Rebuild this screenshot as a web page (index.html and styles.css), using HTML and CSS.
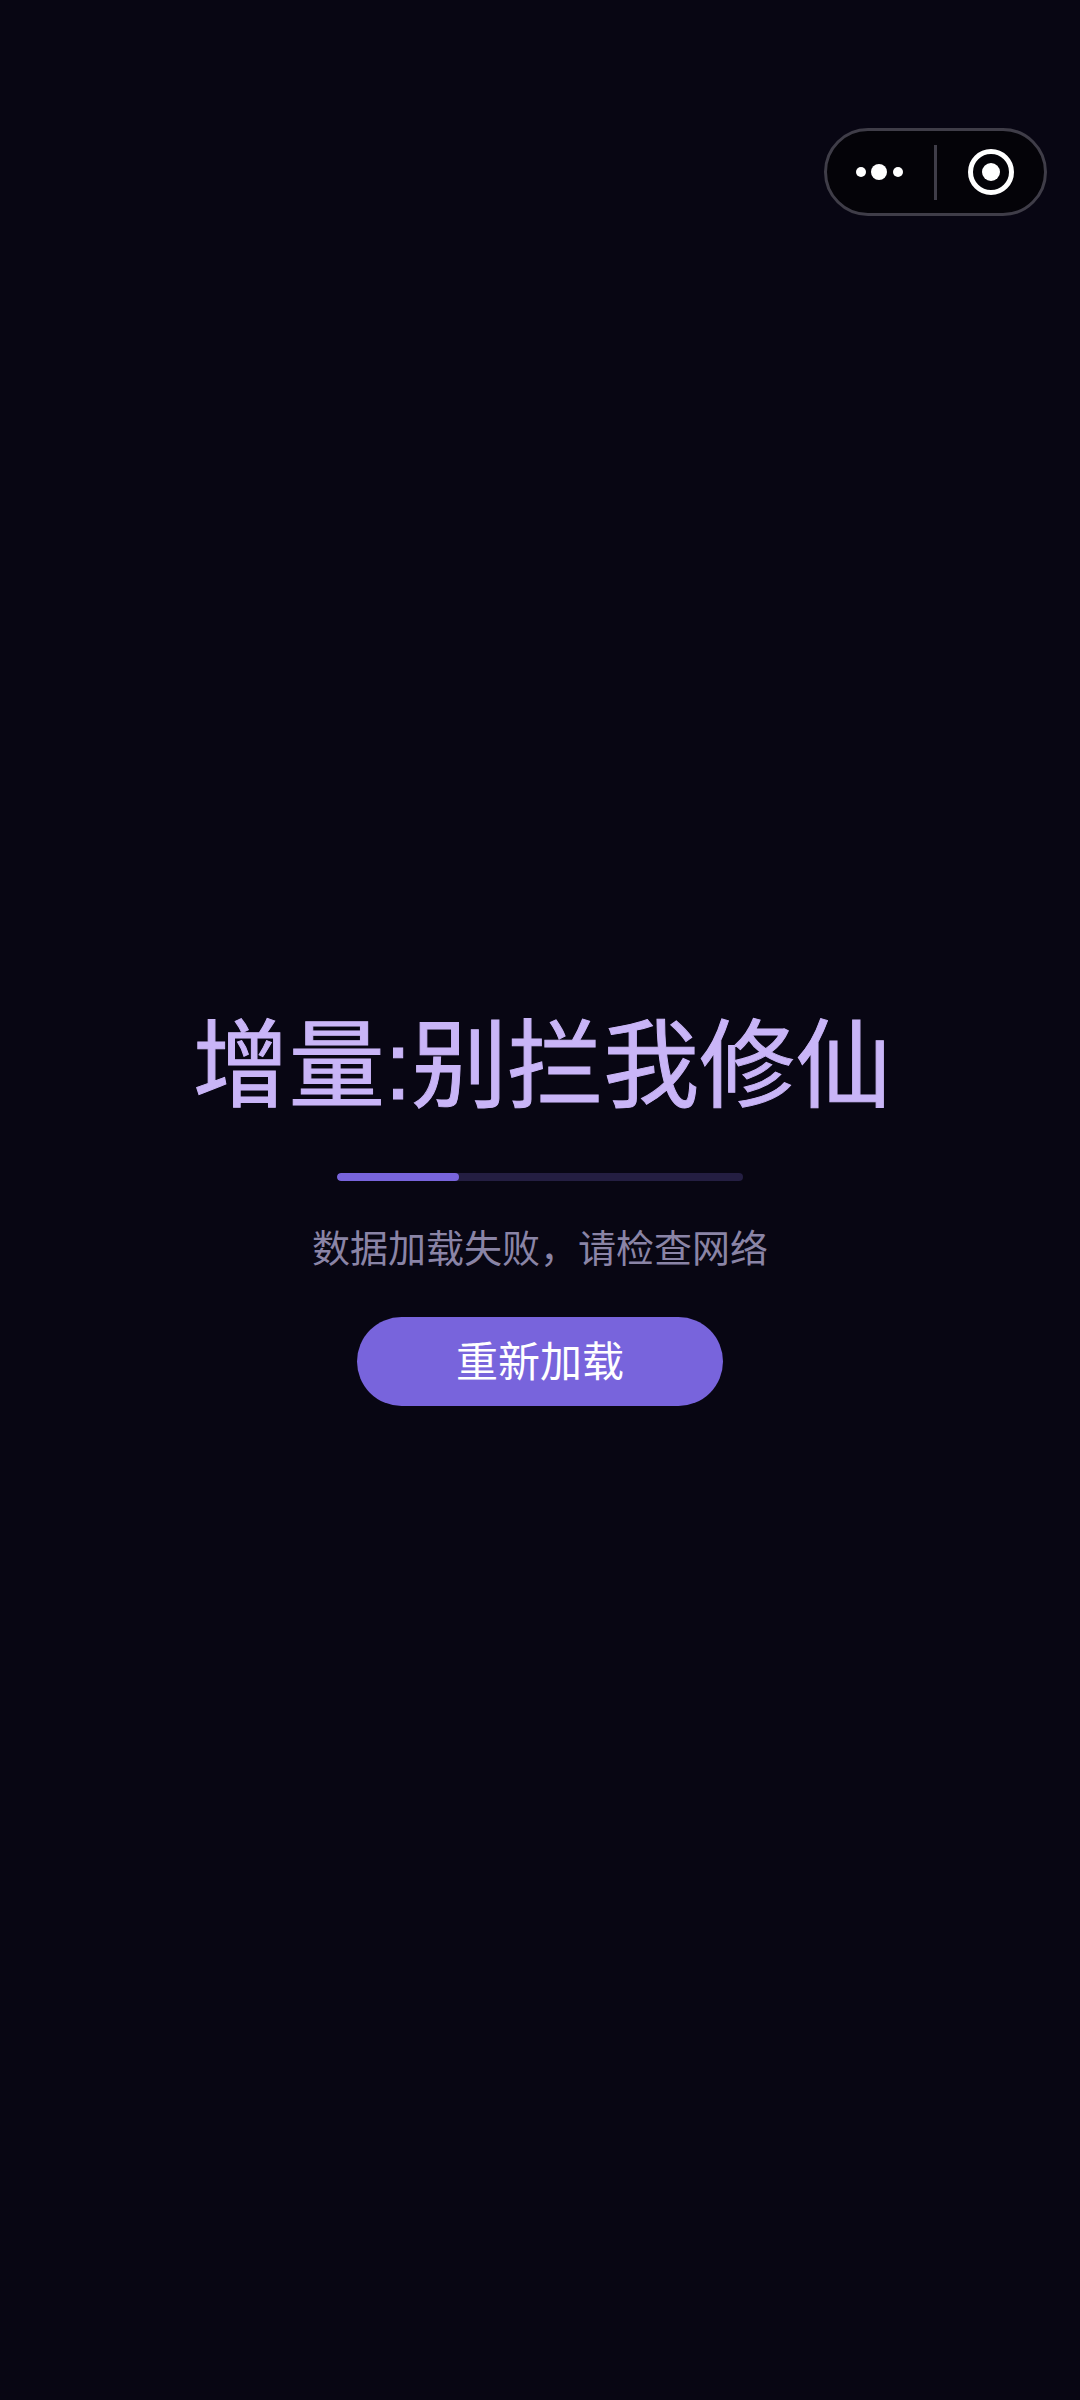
FILE: index.html
```html
<!DOCTYPE html>
<html>
<head>
    <title>增量:别拦我修仙</title>
    <link rel="stylesheet" href="styles.css">
</head>
<body>
    <div class="capsule">
        <div class="capsule-more">
            <svg width="47" height="20" viewBox="0 0 47 20">
                <circle cx="5" cy="10" r="5" fill="#fff"/>
                <circle cx="23" cy="10" r="8" fill="#fff"/>
                <circle cx="42" cy="10" r="5" fill="#fff"/>
            </svg>
        </div>
        <div class="capsule-line"></div>
        <div class="capsule-close">
            <svg width="46" height="46" viewBox="0 0 46 46">
                <circle cx="23" cy="23" r="20.5" fill="none" stroke="#fff" stroke-width="5"/>
                <circle cx="23" cy="23" r="9" fill="#fff"/>
            </svg>
        </div>
    </div>
    <div class="container">
        <h1 class="title">增量:别拦我修仙</h1>
        <div class="progress">
            <div class="progress-fill" style="width: 30%"></div>
        </div>
        <p class="message">数据加载失败，请检查网络</p>
        <button class="retry">重新加载</button>
    </div>
</body>
</html>
```

FILE: styles.css
```css
html, body {
    margin: 0;
    height: 100%;
}
body {
    background: #080613;
    font-family: "Noto Sans CJK SC", "Noto Sans", sans-serif;
}
.capsule {
    position: absolute;
    top: 128px;
    left: 824px;
    width: 223px;
    height: 88px;
    box-sizing: border-box;
    display: flex;
    align-items: center;
    background: #040308;
    border: 3px solid #3f3d48;
    border-radius: 44px;
}
.capsule-more {
    width: 107px;
    display: flex;
    justify-content: center;
}
.capsule-more svg {
    margin-right: 2px;
}
.capsule-line {
    width: 3px;
    height: 55px;
    background: #3f3d48;
}
.capsule-close {
    flex: 1;
    display: flex;
    justify-content: center;
}
.container {
    display: flex;
    flex-direction: column;
    align-items: center;
    padding-top: 998px;
}
.title {
    margin: 0;
    padding-left: 4px;
    font-family: "Liberation Sans", "Noto Sans CJK SC", sans-serif;
    font-size: 96px;
    font-weight: 400;
    -webkit-text-stroke: 1px #c9b5f7;
    line-height: 136px;
    color: #c9b5f7;
}
.progress {
    width: 406px;
    height: 8px;
    margin-top: 39px;
    border-radius: 4px;
    background: #241e42;
    overflow: hidden;
}
.progress-fill {
    height: 100%;
    border-radius: 4px;
    background: #7864dc;
}
.message {
    margin: 37px 0 0;
    font-size: 38px;
    line-height: 56px;
    color: #8a84a6;
}
.retry {
    width: 366px;
    height: 89px;
    margin-top: 43px;
    padding: 0 0 7px;
    border: none;
    border-radius: 45px;
    background: #7864dc;
    color: #fff;
    font-family: inherit;
    font-size: 42px;
}
```
